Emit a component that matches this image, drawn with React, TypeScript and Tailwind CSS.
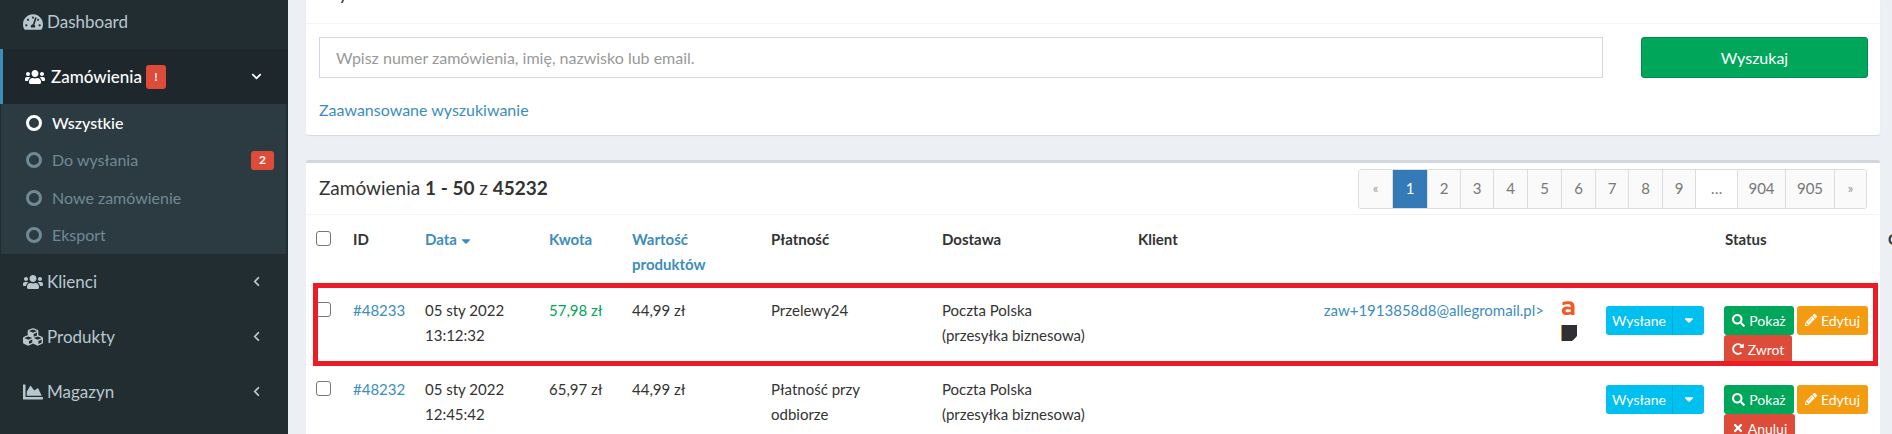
import React from "react";
import { FaTachometerAlt, FaUsers, FaCubes, FaChartArea, FaSearch, FaPencilAlt, FaRedoAlt, FaTimes, FaStickyNote, FaChevronDown, FaChevronLeft, FaCaretDown } from "react-icons/fa";

function NavItem({ icon, label, y }: { icon: React.ReactNode; label: string; y?: string }) {
  return (
    <div className="h-[55px] flex items-center pl-[24px] pr-[26px] text-[#b8c7ce]">
      <span className="w-[24px] text-[20px] flex justify-start -ml-[1px]">{icon}</span>
      <span className="text-[17px]">{label}</span>
      <FaChevronLeft className="ml-auto text-[11px]" />
    </div>
  );
}

function SubItem({ label, active, badge }: { label: string; active?: boolean; badge?: string }) {
  return (
    <div className={`h-[37.5px] flex items-center pl-[25px] pr-[12px] text-[16px] ${active ? "text-white" : "text-[#6f8a97]"}`}>
      <span className={`w-[16px] h-[16px] rounded-full border-[3px] mr-[10px] ${active ? "border-white" : "border-[#6f8a97]"}`} />
      <span className={active ? "font-medium" : ""}>{label}</span>
      {badge && <span className="ml-auto bg-[#dd4b39] text-white text-[12px] font-bold rounded-[3px] w-[23px] h-[19px] flex items-center justify-center">{badge}</span>}
    </div>
  );
}

const pages: [string, number][] = [["«", 33], ["1", 35], ["2", 33], ["3", 33], ["4", 34], ["5", 34], ["6", 34], ["7", 33], ["8", 34], ["9", 33], ["…", 42], ["904", 48], ["905", 49], ["»", 32]];

function Check() {
  return <span className="block w-[15px] h-[15px] rounded-[3px] border border-[#767676] bg-white" />;
}

function Btn({ cls, icon, label }: { cls: string; icon: React.ReactNode; label: string }) {
  return (
    <span className={`h-[29px] rounded-[3px] flex items-center justify-center gap-[4px] text-white text-[14px] ${cls}`}>
      {icon}
      {label}
    </span>
  );
}

function Row({ id, date, time, amount, green, pay, email, last }: { id: string; date: string; time: string; amount: string; green?: boolean; pay: React.ReactNode; email?: string; last: React.ReactNode }) {
  const td = "align-top pt-[12px] px-[8px] leading-[25px]";
  return (
    <tr className="border-t border-[#f4f4f4] h-[77px]">
      <td className="align-top pt-[16px] pl-[10px]"><Check /></td>
      <td className={`${td} text-[#3c8dbc]`}>{id}</td>
      <td className={td}>{date}<br />{time}</td>
      <td className={`${td} ${green ? "text-[#00a65a]" : ""}`}>{amount}</td>
      <td className={td}>44,99 zł</td>
      <td className={td}>{pay}</td>
      <td className={td}>Poczta Polska<br />(przesyłka biznesowa)</td>
      <td className={`${td} text-right text-[#3c8dbc]`}>{email}</td>
      <td className="align-top pt-[14px] pl-[9px]">
        {email && (
          <div className="flex flex-col gap-[9px]">
            <svg width="15" height="16" viewBox="0 0 15 16"><path d="M1.5 2.2C3 1.5 5 1.2 7.5 1.2c4 0 6 1.6 6 4.8v9H9.8v-.9c-1 .7-2.4 1-4 1C2.5 15.100 .8 13.500 .8 10.900c0-2.700 2-4.300 5.200-4.300 1.500 0 2.800.2 3.800.6V6c0-1.300-.9-1.800-2.800-1.800-1.900 0-3.700.3-5.500 1zM9.800 9.800c-.8-.3-2-.5-3.200-.5-1.400 0-2.100.5-2.100 1.500s.7 1.500 2.200 1.500c1.200 0 2.300-.3 3.100-.8z" fill="#f05a28" /></svg>
            <FaStickyNote className="text-[16px] text-[#2d2d33] -scale-x-100 hidden" />
            <svg width="16" height="16" viewBox="0 0 16 16"><path d="M0 0h16v11l-5 5H0z" fill="#2f2f36" /><path d="M0 0h1v16H0z" fill="#d98a2b" /><path d="M12 12h3l-3 3z" fill="#2f2f36" /></svg>
          </div>
        )}
      </td>
      <td className="align-top pt-[20px] pl-[8px]">
        <span className="flex w-[98px] h-[29px] rounded-[3px] bg-[#00c0ef] text-white text-[14px]">
          <span className="w-[67px] flex items-center justify-center border-r border-[#00acd6]">Wysłane</span>
          <span className="flex-1 flex items-center justify-center"><FaCaretDown className="text-[14px]" /></span>
        </span>
      </td>
      <td className="align-top pt-[20px] pl-[7px]">{last}</td>
    </tr>
  );
}

function Options({ third }: { third: React.ReactNode }) {
  return (
    <div className="w-[150px]">
      <div className="flex gap-[3px]">
        <Btn cls="bg-[#00a65a] w-[70px]" icon={<FaSearch className="text-[13px]" />} label="Pokaż" />
        <Btn cls="bg-[#f39c12] w-[71px]" icon={<FaPencilAlt className="text-[12px]" />} label="Edytuj" />
      </div>
      {third}
    </div>
  );
}

export default function App() {
  return (
    <div className="w-[1892px] h-[434px] overflow-hidden flex bg-[#ecf0f5] font-['Lato',sans-serif] text-[15px] text-[#333]">
      <aside className="w-[288px] shrink-0 bg-[#222d32] -mt-[6px] h-[440px]">
        <div className="h-[55px] flex items-center pl-[24px] text-[#b8c7ce]">
          <span className="w-[24px] text-[20px] -ml-[1px]"><FaTachometerAlt /></span>
          <span className="text-[17px]">Dashboard</span>
        </div>
        <div className="h-[55px] flex items-center pl-[23px] pr-[26px] bg-[#1e282c] border-l-[3px] border-[#3c8dbc] text-white">
          <span className="w-[26px] text-[20px] -ml-[1px]"><FaUsers /></span>
          <span className="text-[17px] font-medium">Zamówienia</span>
          <span className="ml-[4px] w-[20px] h-[24px] rounded-[3px] bg-[#dd4b39] text-[12px] font-bold flex items-center justify-center">!</span>
          <FaChevronDown className="ml-auto text-[11px]" />
        </div>
        <div className="h-[150px] bg-[#2c3b41] ml-[1px] mr-[2px]">
          <SubItem label="Wszystkie" active />
          <SubItem label="Do wysłania" badge="2" />
          <SubItem label="Nowe zamówienie" />
          <SubItem label="Eksport" />
        </div>
        <NavItem icon={<FaUsers />} label="Klienci" />
        <NavItem icon={<FaCubes />} label="Produkty" />
        <NavItem icon={<FaChartArea />} label="Magazyn" />
      </aside>
      <main className="flex-1 pl-[18px] pr-[12px] min-w-0">
        <section className="h-[135px] bg-white rounded-b-[3px] shadow-[0_1px_1px_rgba(0,0,0,0.1)] -mt-[0px] overflow-hidden">
          <div className="h-[24px] border-b border-[#f4f4f4] relative overflow-hidden px-[13px]">
            <h3 className="text-[19px] leading-[24px] -mt-[19px]">Wyszukiwanie</h3>
          </div>
          <div className="flex pl-[13px] pr-[12px] pt-[13px] gap-[38px]">
            <div className="flex-1 h-[41px] border border-[#d2d6de] flex items-center px-[16px] text-[#999] text-[16px]">Wpisz numer zamówienia, imię, nazwisko lub email.</div>
            <div className="w-[227px] h-[41px] bg-[#00a65a] rounded-[3px] border border-[#008d4c] text-white text-[16px] flex items-center justify-center">Wyszukaj</div>
          </div>
          <div className="pl-[13px] pt-[20px] text-[#3c8dbc] text-[16px] leading-[24px]">Zaawansowane wyszukiwanie</div>
        </section>
        <section className="relative mt-[25px] h-[300px] bg-white rounded-t-[3px] border-t-[3px] border-[#d2d6de]">
          <div className="h-[52px] border-b border-[#f4f4f4] flex items-center justify-between pl-[13px] pr-[13px]">
            <h3 className="text-[19px]">Zamówienia <b>1 - 50</b> z <b>45232</b></h3>
            <div className="flex h-[40px] border border-[#ddd] rounded-[3px] overflow-hidden">
              {pages.map(([p, w], i) => (
                <span key={i} style={{ width: w }} className={`flex items-center justify-center border-l first:border-l-0 border-[#ddd] ${p === "1" ? "bg-[#337ab7] text-white border-[#337ab7]" : p === "…" ? "bg-white text-[#777]" : "bg-[#fafafa] text-[#777]"} ${p === "«" || p === "»" ? "text-[#999] text-[13px]" : ""}`}>{p}</span>
              ))}
            </div>
          </div>
          <table className="w-full table-fixed border-collapse">
            <colgroup>
              {[39, 72, 124, 83, 139, 171, 196, 422, 46, 119, 163].map((w, i) => <col key={i} style={{ width: w }} />)}
            </colgroup>
            <thead>
              <tr className="h-[70px]">
                <th className="align-top pt-[16px] pl-[10px] font-normal"><Check /></th>
                {[["ID"], ["Data", 1], ["Kwota", 1], ["Wartość produktów", 1], ["Płatność"], ["Dostawa"], ["Klient"], [""], [""], ["Status"], ["Opcje"]].map(([t, l], i) => (
                  <th key={i} className={`align-top text-left font-bold pt-[12px] px-[8px] leading-[25px] ${l ? "text-[#3c8dbc]" : "text-[#333]"}`}>
                    {t}{t === "Data" && <FaCaretDown className="inline text-[14px] ml-[2px]" />}
                  </th>
                ))}
              </tr>
            </thead>
            <tbody>
              <Row id="#48233" date="05 sty 2022" time="13:12:32" amount="57,98 zł" green pay="Przelewy24" email="zaw+1913858d8@allegromail.pl>" last={<Options third={<Btn cls="bg-[#dd4b39] w-[68px]" icon={<FaRedoAlt className="text-[12px]" />} label="Zwrot" />} />} />
              <Row id="#48232" date="05 sty 2022" time="12:45:42" amount="65,97 zł" pay={<>Płatność przy<br />odbiorze</>} last={<Options third={<Btn cls="bg-[#dd4b39] w-[71px]" icon={<FaTimes className="text-[12px]" />} label="Anuluj" />} />} />
            </tbody>
          </table>
          <div className="absolute left-[7px] top-[120px] w-[1565px] h-[83px] border-[5px] border-[#ed1c24] pointer-events-none" />
        </section>
      </main>
    </div>
  );
}
